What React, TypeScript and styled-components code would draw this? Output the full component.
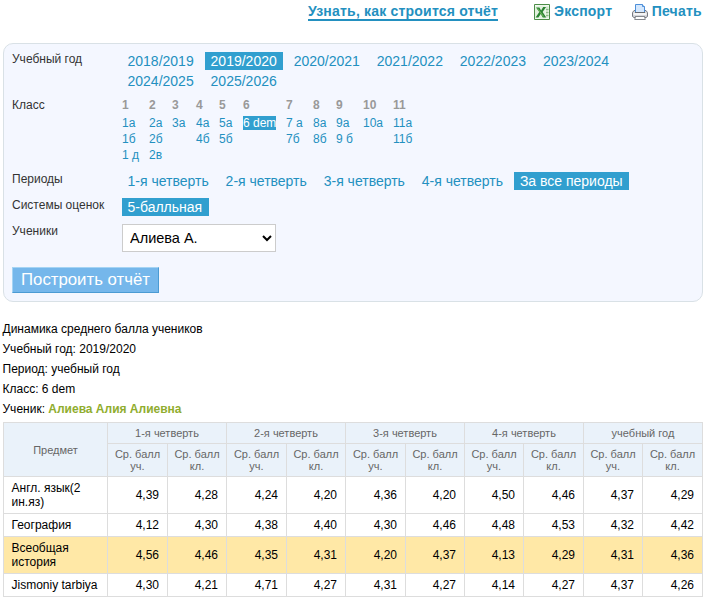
import React from 'react';
import styled, { createGlobalStyle, css } from 'styled-components';

const GlobalStyle = createGlobalStyle`
  html, body { margin: 0; padding: 0; background: #fff; }
  body {
    font-family: "Liberation Sans", Arial, sans-serif;
    font-size: 12px;
    color: #000;
    overflow: hidden;
  }
`;

const Page = styled.div`
  width: 700px;
  height: 598px;
  padding-left: 3px;
  overflow: hidden;
`;

const ActionBar = styled.nav`
  display: flex;
  height: 43px;
  align-items: flex-start;
  padding: 4px 0 0 305px;
  box-sizing: border-box;
  font-size: 14px;
  line-height: 15px;
  font-weight: bold;
  letter-spacing: 0.2px;
`;

const HelpLink = styled.a`
  color: #2390c0;
  width: 190px;
  white-space: nowrap;
  border-bottom: 2px solid #2390c0;
`;

const ActionLink = styled.a<{ $gap: number }>`
  color: #2390c0;
  display: flex;
  align-items: flex-start;
  gap: 4px;
  white-space: nowrap;
  margin-left: ${p => p.$gap}px;
  svg { display: block; flex: none; }
`;

const Panel = styled.form`
  box-sizing: border-box;
  width: 700px;
  height: 259px;
  border: 1px solid #d9e1e6;
  border-radius: 10px;
  background: #f4f7ff;
  padding: 8px 8px 0;
`;

const Field = styled.div<{ $height: number }>`
  display: grid;
  grid-template-columns: 110px 1fr;
  height: ${p => p.$height}px;
`;

const Label = styled.label`
  color: #333;
  line-height: 14px;
`;

const Options = styled.div`
  display: flex;
  flex-wrap: wrap;
  align-content: flex-start;
  column-gap: 4.9px;
  row-gap: 2px;
  width: 540px;
`;

const Option = styled.a<{ $active?: boolean }>`
  font-size: 14px;
  line-height: 18px;
  height: 18px;
  padding: 0 6.5px 0 5.5px;
  white-space: nowrap;
  color: ${p => (p.$active ? '#fff' : '#2390c0')};
  background: ${p => (p.$active ? '#319fcf' : 'transparent')};
`;

const ClassGrid = styled.div`
  display: grid;
  grid-template-columns: 27px 23px 24px 23px 24px 43px 27px 23px 27px 30px 30px;
`;

const ClassColumn = styled.div`
  display: flex;
  flex-direction: column;
  align-items: flex-start;
  gap: 2px;
`;

const Grade = styled.span`
  color: #999;
  font-weight: bold;
  line-height: 14px;
  margin-bottom: 2px;
`;

const ClassLink = styled.a<{ $active?: boolean }>`
  line-height: 14px;
  white-space: nowrap;
  color: ${p => (p.$active ? '#fff' : '#2390c0')};
  background: ${p => (p.$active ? '#319fcf' : 'transparent')};
`;

const StudentSelect = styled.select`
  box-sizing: border-box;
  width: 154px;
  height: 28px;
  margin: 0;
  padding: 0 0 0 3px;
  border: 1px solid #ccc;
  border-radius: 0;
  background: #fff;
  color: #000;
  font: 14.5px "Liberation Sans", Arial, sans-serif;
`;

const SubmitButton = styled.button`
  display: block;
  box-sizing: border-box;
  width: 147px;
  height: 26px;
  padding: 0;
  border: 1px solid;
  border-color: #a5d4f4 #4b9bd3 #4b9bd3 #a5d4f4;
  background: #75b7eb;
  color: #fff;
  font: 16.8px/22px "Liberation Sans", Arial, sans-serif;
  white-space: nowrap;
`;

const Summary = styled.section`
  margin: 17px 0 3px -0.5px;
  line-height: 20px;
`;

const SummaryLine = styled.div``;

const StudentName = styled.b`
  color: #90ad2e;
`;

const ScoreTable = styled.table`
  width: 700px;
  table-layout: fixed;
  border-collapse: collapse;
`;

const Col = styled.col<{ $w: number }>`
  width: ${p => p.$w}px;
`;

const cell = css`
  box-sizing: border-box;
  border: 1px solid #ddd;
  padding: 0;
`;

const Head = styled.th`
  ${cell}
  background: #eaf2fa;
  color: #666;
  font-size: 11px;
  font-weight: normal;
  line-height: 12px;
`;

const Row = styled.tr<{ $h: number; $highlight?: boolean }>`
  height: ${p => p.$h}px;
  background: ${p => (p.$highlight ? '#ffe8a6' : 'transparent')};
`;

const Subject = styled.td`
  ${cell}
  padding-left: 7.5px;
  line-height: 14px;
`;

const Score = styled.td`
  ${cell}
  padding-right: 8px;
  text-align: right;
  line-height: 14px;
`;

const ExcelIcon = () => (
  <svg width="16" height="16" viewBox="0 0 16 16">
    <path d="M.5.5h15v15H.5z" fill="#f4faf3" stroke="#4c8d47" />
    <path d="M12 2.5h2.5v11H12z" fill="#cfe5c9" />
    <path d="M12 5.5h2.5M12 8.5h2.5M12 11.5h2.5" stroke="#8fb88b" />
    <path d="M1 2.5 11.5 1v14L1 13.5z" fill="#e3f1df" />
    <path d="M2 3.5h3.4l1.7 3L9.2 3h2.9L8.6 8l3.7 5.5H8.8L6.7 10l-2.3 3.5H1.6L5.3 8z" fill="#298331" />
    <path d="m3.5 4.5 6 8" stroke="#70b45e" strokeWidth="1.2" />
  </svg>
);

const PrinterIcon = () => (
  <svg width="16" height="16" viewBox="0 0 16 16">
    <path d="M2 6.5h12l1.5 2v4L14 13.5H2L.5 12.5v-4z" fill="#d5d6da" stroke="#777a80" />
    <path d="M3.5 8.5v-8h7l2 2v6z" fill="#d3e7fd" stroke="#4d8fd9" />
    <path d="M10.5.5v2h2" fill="#fff" stroke="#4d8fd9" />
    <path d="M1.5 9h13v2h-13z" fill="#f5f5f5" />
    <path d="M3 8.5h10M3 12.5h10" stroke="#686b70" />
    <path d="M3.5 12.5h9l.8 3H2.7z" fill="#fff" stroke="#85888d" />
  </svg>
);

const years = ['2018/2019', '2019/2020', '2020/2021', '2021/2022', '2022/2023', '2023/2024', '2024/2025', '2025/2026'];
const classes: string[][] = [
  ['1а', '1б', '1 д'], ['2а', '2б', '2в'], ['3а'], ['4а', '4б'], ['5а', '5б'], ['6 dem'],
  ['7 а', '7б'], ['8а', '8б'], ['9а', '9 б'], ['10а'], ['11а', '11б'],
];
const quarters = ['1-я четверть', '2-я четверть', '3-я четверть', '4-я четверть'];
const columns = [104, 60, 59, 60, 59, 60, 59, 59, 60, 59, 60];
const rows = [
  { subject: 'Англ. язык(2 ин.яз)', h: 37, scores: '4,39 4,28 4,24 4,20 4,36 4,20 4,50 4,46 4,37 4,29' },
  { subject: 'География', h: 23, scores: '4,12 4,30 4,38 4,40 4,30 4,46 4,48 4,53 4,32 4,42' },
  { subject: 'Всеобщая история', h: 37, highlight: true, scores: '4,56 4,46 4,35 4,31 4,20 4,37 4,13 4,29 4,31 4,36' },
  { subject: 'Jismoniy tarbiya', h: 23, scores: '4,30 4,21 4,71 4,27 4,31 4,27 4,14 4,27 4,37 4,26' },
];

export default function App() {
  return (
    <Page>
      <GlobalStyle />
      <ActionBar>
        <HelpLink>Узнать, как строится отчёт</HelpLink>
        <ActionLink $gap={36}><ExcelIcon />Экспорт</ActionLink>
        <ActionLink $gap={19.5}><PrinterIcon />Печать</ActionLink>
      </ActionBar>
      <Panel>
        <Field $height={46}>
          <Label>Учебный год</Label>
          <Options>
            {years.map(y => <Option key={y} $active={y === '2019/2020'}>{y}</Option>)}
          </Options>
        </Field>
        <Field $height={74}>
          <Label>Класс</Label>
          <ClassGrid>
            {classes.map((list, i) => (
              <ClassColumn key={i}>
                <Grade>{i + 1}</Grade>
                {list.map(c => <ClassLink key={c} $active={c === '6 dem'}>{c}</ClassLink>)}
              </ClassColumn>
            ))}
          </ClassGrid>
        </Field>
        <Field $height={26}>
          <Label>Периоды</Label>
          <Options>
            {quarters.map(q => <Option key={q}>{q}</Option>)}
            <Option $active>За все периоды</Option>
          </Options>
        </Field>
        <Field $height={26}>
          <Label>Системы оценок</Label>
          <Options><Option $active>5-балльная</Option></Options>
        </Field>
        <Field $height={43}>
          <Label htmlFor="student">Ученики</Label>
          <StudentSelect id="student"><option>Алиева А.</option></StudentSelect>
        </Field>
        <SubmitButton type="button">Построить отчёт</SubmitButton>
      </Panel>
      <Summary>
        <SummaryLine>Динамика среднего балла учеников</SummaryLine>
        <SummaryLine>Учебный год: 2019/2020</SummaryLine>
        <SummaryLine>Период: учебный год</SummaryLine>
        <SummaryLine>Класс: 6 dem</SummaryLine>
        <SummaryLine>Ученик: <StudentName>Алиева Алия Алиевна</StudentName></SummaryLine>
      </Summary>
      <ScoreTable>
        <colgroup>{columns.map((w, i) => <Col key={i} $w={w} />)}</colgroup>
        <thead>
          <Row $h={21}>
            <Head rowSpan={2}>Предмет</Head>
            {[...quarters, 'учебный год'].map(q => <Head key={q} colSpan={2}>{q}</Head>)}
          </Row>
          <Row $h={33}>
            {columns.slice(1).map((_, i) => <Head key={i}>Ср. балл<br />{i % 2 ? 'кл.' : 'уч.'}</Head>)}
          </Row>
        </thead>
        <tbody>
          {rows.map(r => (
            <Row key={r.subject} $h={r.h} $highlight={r.highlight}>
              <Subject>{r.subject}</Subject>
              {r.scores.split(' ').map((s, i) => <Score key={i}>{s}</Score>)}
            </Row>
          ))}
        </tbody>
      </ScoreTable>
    </Page>
  );
}
